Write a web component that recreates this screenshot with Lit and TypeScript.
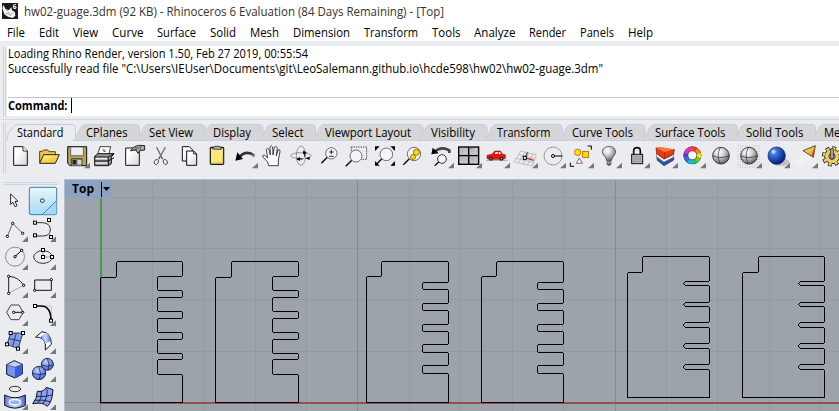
import { LitElement, html, svg, css, nothing, type SVGTemplateResult } from "lit";
import { customElement, property } from "lit/decorators.js";

// [text, start x, end x]
type Span = [string, number, number];

const MENU: Span[] = [
  ["File", 7, 25], ["Edit", 39, 59], ["View", 73, 98], ["Curve", 112, 143.5], ["Surface", 157, 196],
  ["Solid", 210, 236], ["Mesh", 250, 279], ["Dimension", 293, 350], ["Transform", 364, 418],
  ["Tools", 432, 460.5], ["Analyze", 474, 515.5], ["Render", 529, 566], ["Panels", 580, 614], ["Help", 628, 653],
];

const TABS: Span[] = [
  ["Standard", 17, 63.5], ["CPlanes", 86, 127.5], ["Set View", 149, 193], ["Display", 213, 251],
  ["Select", 272, 303.5], ["Viewport Layout", 325, 411], ["Visibility", 431, 475], ["Transform", 497, 550.5],
  ["Curve Tools", 572, 633], ["Surface Tools", 655, 725.5], ["Solid Tools", 746, 803.5], ["Mesh Tools", 823.5, 883],
];

interface Icon { ox: number; flyout?: boolean; art: SVGTemplateResult }

const magnifier = (cx: number, cy: number, r = 17) => svg`
  <path d="M${cx - r * 0.7} ${cy + r * 0.7}L${cx - r * 0.7 - 18} ${cy + r * 0.7 + 18}" stroke="#111" stroke-width="4.5"/>
  <circle cx=${cx} cy=${cy} r=${r} fill="#f4f5f8" stroke="#555" stroke-width="2.5"/>`;

const sphere = (cx: number, cy: number) => svg`
  <circle cx=${cx} cy=${cy} r="25" fill="url(#gs)" stroke="#222" stroke-width="2.5"/>
  <path d="M${cx - 25} ${cy}q25 11 50 0M${cx - 2} ${cy - 25}q-13 25 0 50" fill="none" stroke="#222" stroke-width="2"/>`;

const defs = svg`<defs>
  <linearGradient id="gp" x1="0" y1="0" x2="1" y2="1"><stop offset=".3" stop-color="#fff"/><stop offset="1" stop-color="#d4d4d8"/></linearGradient>
  <linearGradient id="gf" x1="0" y1="0" x2="1" y2="1"><stop offset="0" stop-color="#fff3a0"/><stop offset="1" stop-color="#f2b90c"/></linearGradient>
  <radialGradient id="gs" cx=".38" cy=".3" r=".8"><stop offset="0" stop-color="#fff"/><stop offset=".3" stop-color="#e0e0e0"/><stop offset=".65" stop-color="#9a9a9a"/><stop offset="1" stop-color="#444"/></radialGradient>
  <radialGradient id="gb" cx=".32" cy=".28" r=".75"><stop offset="0" stop-color="#e8f4ff"/><stop offset=".25" stop-color="#3a76e0"/><stop offset="1" stop-color="#021a80"/></radialGradient>
  <radialGradient id="gl" cx=".4" cy=".3" r=".8"><stop offset="0" stop-color="#c4d2ff"/><stop offset=".5" stop-color="#7390f4"/><stop offset="1" stop-color="#3c5cd0"/></radialGradient>
  <linearGradient id="gc" x1="0" y1="0" x2="1" y2="0"><stop offset="0" stop-color="#5f7fe8"/><stop offset=".5" stop-color="#c9d6ff"/><stop offset="1" stop-color="#4a69da"/></linearGradient>
  <linearGradient id="gy" x1="0" y1="0" x2="1" y2="1"><stop offset="0" stop-color="#ffe9a0"/><stop offset="1" stop-color="#ef8a00"/></linearGradient>
  <linearGradient id="sel" x1="0" y1="0" x2="0" y2="1"><stop offset="0" stop-color="#e8f6fd"/><stop offset="1" stop-color="#a7daf4"/></linearGradient>
</defs>`;

const WHEEL = ["#f33", "#f80", "#fe0", "#7c2", "#1c7", "#1be", "#27e", "#63d", "#d3c", "#f38"];
const wheelArt = WHEEL.map((c, i) => {
  const a = (i * 36 - 90) * Math.PI / 180, b = ((i + 1) * 36 - 86) * Math.PI / 180;
  return svg`<path d="M${187 + 20 * Math.cos(a)} ${112 + 20 * Math.sin(a)}A20 20 0 0 1 ${187 + 20 * Math.cos(b)} ${112 + 20 * Math.sin(b)}" fill="none" stroke=${c} stroke-width="12"/>`;
});

const TOOLS: Icon[] = [
  { ox: 0, art: svg`<path d="M41 86H69L82 99V142H41Z" fill="url(#gp)" stroke="#111" stroke-width="3"/><path d="M69 86V99H82" fill="#fff" stroke="#111" stroke-width="2.5"/>` },
  { ox: 0, art: svg`<path d="M119 134V100H127L131 96H143L147 101H166V110" fill="#f6c63a" stroke="#222" stroke-width="2.5"/><path d="M119 136L131 110H178L166 136Z" fill="url(#gf)" stroke="#222" stroke-width="3"/>` },
  { ox: 0, flyout: true, art: svg`<path d="M203 86H260V143H210L203 136Z" fill="#b3a458" stroke="#111" stroke-width="3"/><path d="M212 87H250V113H212Z" fill="#eceef2" stroke="#444" stroke-width="2"/><path d="M214 143V122H246V143" fill="#888" stroke="#222" stroke-width="2"/><path d="M218 126H229V139H218Z" fill="#222"/><path d="M233 126H244V139H233Z" fill="#d7d7d7"/>` },
  { ox: 0, art: svg`<path d="M293 110L300 86H332L326 110Z" fill="#fff" stroke="#222" stroke-width="2.5"/><path d="M284 115L294 107H342L334 117V137L325 143H284Z" fill="#999" stroke="#111" stroke-width="3"/><path d="M284 117H325L342 107M325 118V142M284 129H325L342 119" fill="none" stroke="#111" stroke-width="3"/><path d="M287 122H322M287 135H322" stroke="#e8e8e8" stroke-width="5"/><path d="M307 94Q316 92 318 101Q308 105 307 94" fill="#777"/>` },
  { ox: 0, art: svg`<path d="M377 90H408L418 101V142H377Z" fill="url(#gp)" stroke="#111" stroke-width="3"/><path d="M391 98L404 86L416 82L434 83V96L420 98L414 106L408 96Z" fill="#aaa" stroke="#222" stroke-width="3"/><path d="M394 98L413 93M421 83V97M404 90H418" stroke="#444" stroke-width="2"/>` },
  { ox: 0, art: svg`<path d="M470 88L488 124M496 88L476 124" stroke="#444" stroke-width="3.5"/><path d="M471 90L487 119M495 90L481 115" stroke="#bbb" stroke-width="1.3"/><ellipse cx="469" cy="132" rx="6" ry="8" transform="rotate(28 469 132)" fill="none" stroke="#444" stroke-width="2.5"/><ellipse cx="496" cy="132" rx="6" ry="8" transform="rotate(-28 496 132)" fill="none" stroke="#444" stroke-width="2.5"/>` },
  { ox: 0, art: svg`<path d="M547 86H568L577 95V129H547Z" fill="url(#gp)" stroke="#111" stroke-width="3"/><path d="M560 99H581L590 108V142H560Z" fill="url(#gp)" stroke="#111" stroke-width="3"/><path d="M581 99V108H590" fill="none" stroke="#111" stroke-width="2.5"/>` },
  { ox: 210, art: svg`<rect x="1" y="88" width="40" height="51" rx="3" fill="#fbe87c" stroke="#111" stroke-width="3.5"/><path d="M8 93V90L15 85H28L34 90V94Z" fill="#bbb" stroke="#222" stroke-width="2.5"/><path d="M6 135L38 134V112" stroke="#d7bd42" stroke-width="2.5" fill="none"/>` },
  { ox: 210, flyout: true, art: svg`<path d="M86 119Q108 94 132 112" fill="none" stroke="#333" stroke-width="8"/><path d="M126 108L133 116" stroke="#777" stroke-width="6"/><path d="M76 128L82 103L99 123Z" fill="#000"/>` },
  { ox: 210, art: svg`<path d="M176 143L173 132L158 116Q157 110 164 112L173 120L169 94Q172 87 177 94L181 111L180 87Q184 80 188 87L189 111L193 88Q198 82 202 89L199 113L204 96Q211 93 210 101L205 126L205 143Z" fill="#fafafa" stroke="#222" stroke-width="2.5"/>` },
  { ox: 210, art: svg`<ellipse cx="273" cy="113" rx="31" ry="9" fill="none" stroke="#888" stroke-width="2.5"/><ellipse cx="273" cy="113" rx="14" ry="29" fill="none" stroke="#888" stroke-width="2.5"/><path d="M259 123L270 117V129ZM280 97L291 105L279 109ZM287 121L299 116L299 126Z" fill="#000"/><path d="M262 123H278M284 103V116" stroke="#000" stroke-width="3"/>` },
  { ox: 210, art: svg`${magnifier(364, 106)}<path d="M357 102H371M364 95V109M357 115H371" stroke="#111" stroke-width="2.5"/>` },
  { ox: 210, art: svg`<path d="M424 87H470V124H454" fill="none" stroke="#222" stroke-width="2.5" stroke-dasharray="4 3"/>${magnifier(438, 114, 18)}<path d="M424 87V102" stroke="#222" stroke-width="2.5" stroke-dasharray="4 3"/>` },
  { ox: 210, art: svg`${magnifier(529, 109, 19)}<path d="M495 85H509L495 99ZM555 85V99L541 85ZM495 143V129L509 143ZM555 143H541L555 129Z" fill="#000"/>` },
  { ox: 210, art: svg`${magnifier(612, 108, 20)}<circle cx="619" cy="103" r="9" fill="#ffd900" stroke="#5b4900" stroke-width="2"/><circle cx="609" cy="117" r="7.5" fill="#ffd900" stroke="#5b4900" stroke-width="2"/>` },
  { ox: 420, flyout: true, art: svg`<path d="M43 102Q64 83 88 97L88 105" fill="none" stroke="#444" stroke-width="8"/><path d="M34 109L38 89L56 106Z" fill="#000"/><path d="M57 131L44 143" stroke="#111" stroke-width="4"/><circle cx="66" cy="123" r="13" fill="#f4f5f8" stroke="#333" stroke-width="3"/>` },
  { ox: 420, flyout: true, art: svg`<rect x="116" y="87" width="60" height="52" fill="#b9bbbe" stroke="#000" stroke-width="4"/><path d="M146 87V139M116 113H176" stroke="#000" stroke-width="4"/><path d="M120 105H143M120 132H143M150 105H173M150 132H173M137 91V109M166 91V109M137 117V136M166 117V136" stroke="#d5d6d9" stroke-width="2"/><path d="M146 90H158" stroke="#24a" stroke-width="2"/>` },
  { ox: 420, flyout: true, art: svg`<path d="M198 127H263" stroke="#999" stroke-width="2.5"/><path d="M201 112L216 109L224 99H241L247 108L256 110V121L249 124H207L201 121Z" fill="#ef1010" stroke="#700" stroke-width="1.5"/><path d="M224 108L227 102H233V108ZM236 102H240L243 108H236Z" fill="#fff"/><circle cx="213" cy="122" r="6" fill="#222"/><circle cx="244" cy="122" r="6" fill="#222"/><circle cx="213" cy="122" r="2" fill="#ddd"/><circle cx="244" cy="122" r="2" fill="#ddd"/>` },
  { ox: 420, flyout: true, art: svg`<path d="M282 132L302 99L349 110L337 144ZM289 121L341 134M296 110L345 122M294 136L315 102M308 139L327 105M322 142L339 108" fill="none" stroke="#aaa" stroke-width="2"/><path d="M315 119L341 127" stroke="#c22" stroke-width="4"/><path d="M315 119L323 103" stroke="#2a7a3a" stroke-width="4"/><rect x="310" y="115" width="9" height="9" fill="#fff" stroke="#000" stroke-width="3"/>` },
  { ox: 420, flyout: true, art: svg`<circle cx="399" cy="114" r="27" fill="none" stroke="#999" stroke-width="3"/><path d="M399 114H427" stroke="#000" stroke-width="3"/><circle cx="399" cy="114" r="4.5" fill="#fff" stroke="#000" stroke-width="3"/>` },
  { ox: 420, flyout: true, art: svg`<path d="M503 84H514V95M451 134V145H462" fill="none" stroke="#000" stroke-width="3"/><circle cx="473" cy="103" r="9.5" fill="#fd0" stroke="#a60" stroke-width="2.5"/><rect x="488" y="100" width="18" height="18" fill="#fd0" stroke="#a60" stroke-width="2.5"/><path d="M478 120L487 136H469Z" fill="#fff" stroke="#845" stroke-width="2.5"/>` },
  { ox: 420, flyout: true, art: svg`<path d="M560 128Q558 117 550 111Q544 101 549 93Q556 85 567 85Q579 85 585 94Q590 104 582 113Q576 119 574 128Z" fill="url(#gs)" stroke="#555" stroke-width="2.5"/><path d="M561 131H573V139L567 143L561 139Z" fill="#777" stroke="#333" stroke-width="2"/><path d="M561 134H573" stroke="#ccc" stroke-width="2"/>` },
  { ox: 630, flyout: true, art: svg`<path d="M11 111V99Q11 89 21 89Q31 89 31 99V111" fill="none" stroke="#111" stroke-width="5"/><rect x="5" y="109" width="33" height="28" fill="#bbb" stroke="#111" stroke-width="3"/><path d="M9 116H35M9 123H35M9 130H35" stroke="#777" stroke-width="2"/>` },
  { ox: 630, flyout: true, art: svg`<path d="M80 112L102 130L131 117V126L102 143L82 127Z" fill="#2855a8" stroke="#223" stroke-width="2"/><path d="M79 106L102 124L131 109V117L102 132L80 116Z" fill="#fff" stroke="#667" stroke-width="1.5"/><path d="M78 89L104 101L133 94L131 109L102 123L80 107Z" fill="#e83a0c" stroke="#611" stroke-width="2"/><path d="M78 89L90 86L133 94L104 103Z" fill="#ff7a3a"/><path d="M104 103V121" stroke="#a31c00" stroke-width="2"/>` },
  { ox: 630, flyout: true, art: svg`<circle cx="187" cy="112" r="27" fill="#333"/>${wheelArt}<circle cx="187" cy="112" r="13.5" fill="#f7f8fb" stroke="#444" stroke-width="2"/>` },
  { ox: 630, art: sphere(273, 113) },
  { ox: 630, flyout: true, art: svg`<path d="M323 84H392M323 92H392M323 100H392M323 108H392M323 116H392M323 124H392M323 132H392M323 140H392M323 147H392" stroke="#b5b8c0" stroke-width="3" stroke-dasharray="3 4"/>${sphere(357, 113)}` },
  { ox: 630, flyout: true, art: svg`<ellipse cx="452" cy="132" rx="26" ry="12" fill="#bfc1c8"/><circle cx="440" cy="113" r="26" fill="url(#gb)" stroke="#001b55" stroke-width="2"/>` },
  { ox: 630, flyout: true, art: svg`<path d="M520 97L496 139Q521 152 541 119Z" fill="#f1f1ef"/><path d="M519 98L556 83L550 118Z" fill="url(#gy)" stroke="#333" stroke-width="2.5"/><path d="M556 83L553 101L550 118L545 112Z" fill="#9d5a13"/>` },
  { ox: 630, art: svg`<circle cx="606" cy="115" r="24" fill="none" stroke="#222" stroke-width="13" stroke-dasharray="11 7.8"/><circle cx="606" cy="115" r="22" fill="#f0cc62" stroke="#222" stroke-width="3"/><circle cx="606" cy="115" r="24" fill="none" stroke="#f0cc62" stroke-width="8" stroke-dasharray="8 10.8" stroke-dashoffset="-1.5"/><circle cx="606" cy="115" r="9" fill="#ebecf0" stroke="#222" stroke-width="3"/><rect x="601" y="92" width="10" height="30" rx="3" fill="#999" stroke="#222" stroke-width="2"/>` },
];

const node = (x: number, y: number) => svg`<rect x=${x - 4.5} y=${y - 4.5} width="9" height="9" fill="#fff" stroke="#000" stroke-width="3"/>`;
const dot = (x: number, y: number) => svg`<circle cx=${x} cy=${y} r="3.5" fill="#fff" stroke="#000" stroke-width="3"/>`;

const PALETTE: SVGTemplateResult[] = [
  svg`<path d="M32 42V73L39 67L45 80L51 77L45 64H54Z" fill="#fff" stroke="#000" stroke-width="2.5"/>`,
  svg`<rect x="88" y="22" width="82" height="82" rx="5" fill="url(#sel)" stroke="#3c7fb1" stroke-width="3"/><path d="M129 103L169 63V103Z" fill="#a5daf5"/><path d="M129 102L169 62" stroke="#3c8ab8" stroke-width="3"/><circle cx="127" cy="62" r="5.5" fill="#fff" stroke="#222" stroke-width="3"/>`,
  svg`<path d="M22 169L38 130L68 160" fill="none" stroke="#666" stroke-width="3"/>${dot(22, 169)}${dot(38, 130)}${dot(68, 160)}`,
  svg`<path d="M105 128H128Q151 130 151 149Q151 168 128 168H105" fill="none" stroke="#333" stroke-width="3"/><path d="M147 120V132M153 170L147 160" stroke="#aaa" stroke-width="2"/>${node(105, 128)}${node(147, 120)}${node(105, 166)}${node(153, 171)}`,
  svg`<circle cx="45" cy="230" r="28.5" fill="none" stroke="#777" stroke-width="2.5"/><path d="M45 230L65 211" stroke="#000" stroke-width="3"/>${dot(45, 230)}${dot(65, 211)}`,
  svg`<ellipse cx="129" cy="231" rx="28" ry="19" fill="none" stroke="#333" stroke-width="3"/><path d="M129 210V231H156" fill="none" stroke="#888" stroke-width="2.5"/>${node(129, 210)}${node(129, 231)}${node(156, 231)}`,
  svg`<path d="M26 340V289Q55 290 71 316" fill="none" stroke="#222" stroke-width="3"/><path d="M26 340L71 316" stroke="#999" stroke-width="2.5"/>${dot(26, 289)}${dot(71, 316)}${dot(26, 340)}`,
  svg`<path d="M104 300H154V331H104Z" fill="none" stroke="#111" stroke-width="3"/>${dot(154, 299)}${dot(104, 331)}`,
  svg`<path d="M20 52L33 30H57L69 52L57 74H33Z" fill="none" stroke="#444" stroke-width="3"/><path d="M43 52H68" stroke="#111" stroke-width="3"/>${dot(41, 52)}${dot(68, 52)}`,
  svg`<path d="M128 33H154V60" fill="none" stroke="#aaa" stroke-width="2"/><path d="M105 33H123Q153 33 153 77" fill="none" stroke="#000" stroke-width="5"/>${node(105, 33)}${node(153, 77)}`,
  svg`<path d="M32 114H69L54 161L21 148Z" fill="#849ef3" stroke="#223" stroke-width="2.5"/><path d="M49 114L38 154M27 131L61 138" stroke="#223" stroke-width="2.5"/>${node(32, 114)}${node(69, 114)}${node(21, 148)}${node(54, 161)}`,
  svg`<path d="M107 126L126 110Q154 113 154 148L136 165V147Q132 126 107 126Z" fill="#fff" stroke="#111" stroke-width="3"/><path d="M120 127L138 113Q151 120 153 137L136 146Q132 132 120 127Z" fill="url(#gc)"/>`,
  svg`<path d="M20 209L43 197L67 208V237L45 249L20 238Z" fill="#7892f0" stroke="#111" stroke-width="3"/><path d="M20 209L43 198L67 208L45 217Z" fill="#c1ceff" stroke="#445" stroke-width="2"/><path d="M45 217L67 208V237L45 249Z" fill="#3c5bd6"/>`,
  svg`<circle cx="142" cy="208" r="18" fill="url(#gl)" stroke="#112" stroke-width="2.5"/><circle cx="117" cy="234" r="20" fill="url(#gl)" stroke="#112" stroke-width="2.5"/><path d="M124 210Q142 218 160 210M142 190Q151 208 144 226M97 235Q117 243 137 235M116 215Q126 235 118 253" fill="none" stroke="#112" stroke-width="2"/>`,
  svg`<ellipse cx="45" cy="282" rx="17" ry="8" fill="none" stroke="#333" stroke-width="3"/><path d="M14 300Q45 317 76 300V331Q45 348 14 331Z" fill="url(#gc)" stroke="#111" stroke-width="3"/><ellipse cx="45" cy="322" rx="17" ry="8" fill="#9db2ff" stroke="#fff" stroke-width="4"/>`,
  svg`<path d="M112 289Q131 292 139 277L159 284Q157 320 142 334Q128 320 98 326Q112 310 112 289Z" fill="#8aa3f4" stroke="#111" stroke-width="3"/><path d="M109 304Q133 307 155 300M104 316Q130 313 150 320M124 289Q126 313 112 325M141 281Q144 310 127 327" fill="none" stroke="#112" stroke-width="2.5"/>`,
];

// Comb-shaped gauge: stepped upper left corner, notches cut in from the right edge.
function gauge(l: number, t: number, sx: number, sy: number, r: number, b: number, inner: number, cuts: number[][], tip = 1): string {
  let d = `M${l} ${b}V${sy + 1}L${l + 1} ${sy}H${sx - 1}L${sx} ${sy - 1}V${t + 1}L${sx + 1} ${t}H${r - 1}L${r} ${t + 1}`;
  for (const [a, z] of cuts) d += `V${a - 1}L${r - 1} ${a}H${inner + tip}L${inner} ${a + tip}V${z - tip}L${inner + tip} ${z}H${r - 1}L${r} ${z + 1}`;
  return d + `V${b}Z`;
}
const WIDE = [[276.5, 290.5], [297.5, 311.5], [318.5, 332.5], [339.5, 353.5], [359.5, 374.5]];
const MID = [[282.5, 289.5], [303.5, 310.5], [324.5, 331.5], [344.5, 352.5], [365.5, 373.5]];
const SLIM = [[281.5, 285.5], [302.5, 306.5], [322.5, 327.5], [343.5, 348.5], [364.5, 369.5]];
const GAUGES = [
  gauge(100.5, 261.5, 116.5, 277.5, 182.5, 402.5, 157.5, WIDE),
  gauge(215.5, 261.5, 231.5, 277.5, 298.5, 402.5, 272.5, WIDE),
  gauge(366.5, 261.5, 381.5, 276.5, 448.5, 402.5, 422.5, MID),
  gauge(481.5, 261.5, 496.5, 276.5, 563.5, 402.5, 537.5, MID),
  gauge(627.5, 256.5, 642.5, 272.5, 709.5, 397.5, 683.5, SLIM, 2),
  gauge(742.5, 256.5, 758.5, 272.5, 824.5, 397.5, 798.5, SLIM, 2),
];

@customElement("fit-text")
class FitText extends LitElement {
  @property() text = "";
  @property({ type: Number }) width = 10;
  @property({ type: Number }) base = 13;
  static styles = css`
    :host { display: block; }
    svg { display: block; height: 15px; overflow: visible; }
    text { fill: currentColor; white-space: pre; }
  `;
  render() {
    return html`<svg width=${this.width}><text x="0" y=${this.base} textLength=${this.width} lengthAdjust="spacingAndGlyphs">${this.text}</text></svg>`;
  }
}

@customElement("app-root")
class AppRoot extends LitElement {
  static styles = css`
    :host { display: flex; flex-direction: column; position: relative; width: 839px; height: 411px; overflow: hidden; background: #ebecf0; color: #000; font: 12px "Open Sans", "Noto Sans", sans-serif; }
    * { box-sizing: border-box; }
    svg { display: block; flex: none; }
    .defs { position: absolute; }
    .title { display: flex; height: 25px; flex: none; background: #fff; padding: 3px 0 0 2px; gap: 5.5px; color: #333; }
    .menu { display: flex; height: 16px; flex: none; background: #fff; padding-left: 7px; }
    .item { flex: none; }
    .console { height: 75px; flex: none; padding: 5px 0 0 7px; position: relative; }
    .paper { background: #fff; height: 70px; padding-left: 1px; display: flex; flex-direction: column; }
    .log { height: 52px; border-bottom: 1px solid #c0c4d8; }
    .line { height: 15px; }
    .prompt { display: flex; font-weight: bold; }
    .caret { width: 1px; height: 15px; margin: 0 0 0 3.5px; background: #000; }
    .grip { position: absolute; left: 3px; width: 3px; border: solid #ced3e3; border-width: 0 1px; }
    .g1 { top: 6px; height: 70px; }
    .g2 { top: 7px; height: 50px; }
    .bars { position: relative; height: 60px; flex: none; padding-top: 3px; }
    .edge { height: 1px; background: #d5d7df; margin: 0 0 4px 2px; }
    .tabs { display: flex; height: 17px; padding-left: 7px; overflow: hidden; }
    .tools { display: flex; padding: 1px 0 0 6px; height: 33px; }
    .main { display: flex; flex: 1; margin-top: 3px; min-height: 0; }
    .side { width: 64px; flex: none; padding: 3px 0 0 1px; }
    .rule { height: 3px; width: 55px; margin-left: 2px; border: solid #ced3e3; border-width: 1px 0; }
    .grid { display: grid; grid-template-columns: 28px 28px; padding-top: 2px; }
    .view { flex: 1; }
  `;

  tab([text, start, end]: Span, i: number) {
    const next = TABS[i + 1]?.[1] ?? 895;
    const on = i === 0;
    const x0 = on ? 7 : start - 12;
    const step = next - 12 - x0;
    const right = end - x0 + 12;
    const d = `M0 17L${on ? 1 : 1.5} ${on ? 10 : 14}L${on ? 6 : 7} 3Q${on ? 8 : 9} .5 12 .5H${right - 4}Q${right} .5 ${right} 5V17`;
    return html`<svg class="item" width=${step} height="17" overflow="visible">
      <path d=${d} fill=${on ? "#ebecf0" : "#d6d6d7"} stroke="#c3cce2"/>
      ${on ? nothing : svg`<path d="M-2 16.5H${right}" stroke="#c9cfe0"/>`}
      <text x=${start - x0} y="13" textLength=${end - start} lengthAdjust="spacingAndGlyphs">${text}</text>
    </svg>`;
  }

  tool(icon: Icon, i: number) {
    const x = 18 + 84 * i - icon.ox * 3;
    return html`<svg width="28" height="32" viewBox="${x} 72 84 96" overflow="visible">${icon.art}
      ${icon.flyout ? svg`<path d="M${x + 84} 134V151H${x + 66}Z" fill="#777"/>` : nothing}</svg>`;
  }

  cell(art: SVGTemplateResult, i: number) {
    const r = i >> 1, x = 3 + 84 * (i % 2), y = r < 4 ? 21 + 84 * r : 84 * r - 324;
    return html`<svg width="28" height="28" viewBox="${x} ${y} 84 84" overflow="visible">${art}
      ${r ? svg`<path d="M${x + 81} ${y + 64}V${y + 81}H${x + 63}Z" fill="#777"/>` : nothing}</svg>`;
  }

  render() {
    const xs = [152, 203, 255, 306, 409, 460, 512, 563, 666, 717, 769, 820];
    return html`
      <svg class="defs" width="0" height="0">${defs}</svg>
      <div class="title">
        <svg width="16" height="16" viewBox="6 9 48 48"><path d="M6 9H54V57H6Z" fill="#1b1b1b"/><path d="M7 25L10 14L17 28L27 30L34 22L36 31L45 37L46 47L38 54L24 50L13 43Z" fill="#f4f4f4"/><path d="M20 31L29 40M17 40L30 43M38 38L30 48" stroke="#777" stroke-width="2"/><text x="38" y="27" font-size="20" font-weight="bold" fill="#fff">6</text></svg>
        <fit-text text="hw02-guage.3dm (92 KB) - Rhinoceros 6 Evaluation (84 Days Remaining) - [Top]" width="420"></fit-text>
      </div>
      <div class="menu">${MENU.map(([t, a, b], i) => html`<svg class="item" width=${(MENU[i + 1]?.[1] ?? 660) - a} height="16"><text x="0" y="12" textLength=${b - a} lengthAdjust="spacingAndGlyphs">${t}</text></svg>`)}</div>
      <div class="console">
        <div class="grip g1"></div>
        <div class="paper">
          <div class="log">
            <div class="line"><fit-text text="Loading Rhino Render, version 1.50, Feb 27 2019, 00:55:54" width="300" base="12"></fit-text></div>
            <div class="line"><fit-text text='Successfully read file "C:\\Users\\IEUser\\Documents\\git\\LeoSalemann.github.io\\hcde598\\hw02\\hw02-guage.3dm"' width="595" base="12"></fit-text></div>
          </div>
          <div class="prompt"><fit-text text="Command:" width="59.5" base="12"></fit-text><div class="caret"></div></div>
        </div>
      </div>
      <div class="bars">
        <div class="grip g2"></div>
        <div class="edge"></div>
        <div class="tabs">${TABS.map((t, i) => this.tab(t, i))}</div>
        <div class="tools">${TOOLS.map((t, i) => this.tool(t, i))}</div>
      </div>
      <div class="main">
        <div class="side">
          <div class="rule"></div>
          <div class="grid">${PALETTE.map((p, i) => this.cell(p, i))}</div>
        </div>
        <svg class="view" width="775" height="232" viewBox="64 179 775 232" shape-rendering="crispEdges">
          <path d="M64 179H839V411H64Z" fill="#b4bccb"/>
          <path d="M65 180H839V411H65Z" fill="#9da3aa"/>
          ${xs.map((x) => svg`<path d="M${x + 0.5} 180V411" stroke="#939aa1"/>`)}
          ${[197, 248, 299, 351].map((y) => svg`<path d="M65 ${y + 0.5}H839" stroke="#939aa1"/>`)}
          <path d="M357.5 180V411M615.5 180V411M100.5 180V411M65 402.5H100" stroke="#868a94"/>
          <path d="M100 403H839" stroke="#96504f" stroke-width="2"/>
          <path d="M101 198V402" stroke="#4b994c" stroke-width="2"/>
          ${GAUGES.map((d) => svg`<path d=${d} fill="none" stroke="#000"/>`)}
          <path d="M65 180H112V198H65Z" fill="#8ba3c2"/>
          <path d="M101.5 182V197" stroke="#000"/>
          <path d="M103 187H110L106.5 191Z" fill="#000" shape-rendering="auto"/>
          <text x="72" y="193" textLength="22" lengthAdjust="spacingAndGlyphs" font-weight="bold">Top</text>
        </svg>
      </div>`;
  }
}
